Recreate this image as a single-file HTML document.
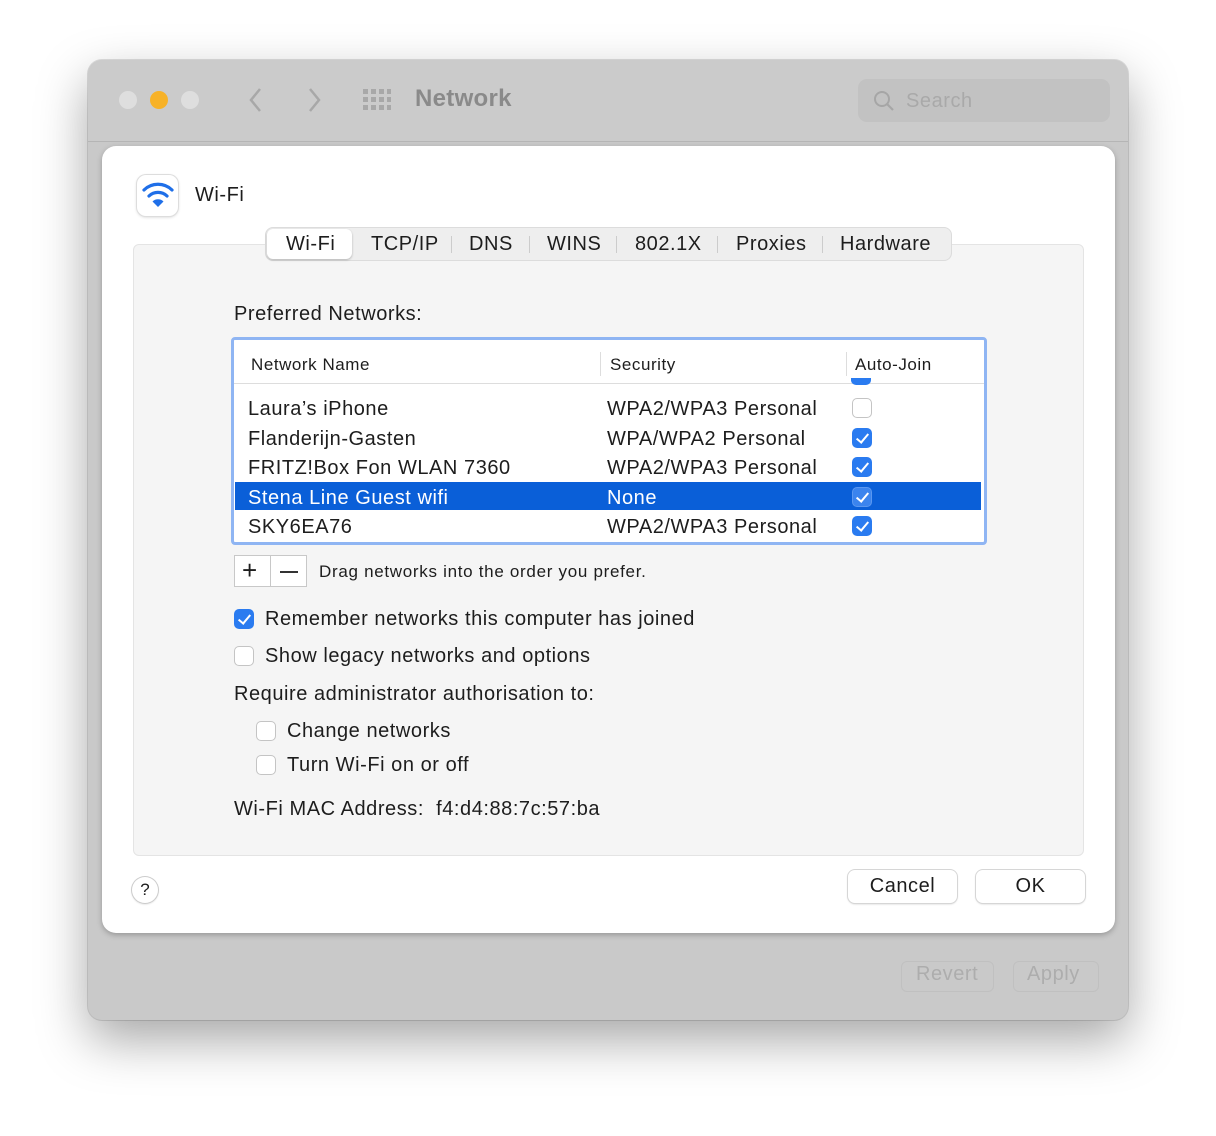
<!DOCTYPE html>
<html><head><style>
*{box-sizing:border-box;margin:0;padding:0}
body{width:1216px;height:1136px;background:#fff;font-family:"Liberation Sans",sans-serif;position:relative;overflow:hidden;color:#1d1d1d;letter-spacing:0.55px}
.abs{position:absolute}
.win{left:88px;top:60px;width:1040px;height:960px;background:#c9c9c9;border-radius:14px;box-shadow:0 20px 50px rgba(0,0,0,.35),0 0 0 1px rgba(0,0,0,.12)}
.tb{left:0;top:0;width:1040px;height:82px;border-bottom:1px solid #b5b5b5;background:#cbcbcb;border-radius:14px 14px 0 0}
.dot{width:18px;height:18px;border-radius:50%;top:31px}
.sheet{left:102px;top:146px;width:1013px;height:787px;background:#fff;border-radius:14px;box-shadow:0 2px 6px rgba(0,0,0,.25)}
.panel{left:133px;top:244px;width:951px;height:612px;background:#f5f5f5;border:1px solid #e4e4e4;border-radius:6px}
.t{position:absolute;font-size:20px;white-space:nowrap}
.cb{position:absolute;width:20px;height:20px;border-radius:5px;border:1px solid #c4c4c4;background:#fff}
.cb.on{background:#2a7bf0;border-color:#2a7bf0}
.cb.on:after{content:"";position:absolute;left:6px;top:2px;width:5px;height:10px;border:solid #fff;border-width:0 2.5px 2.5px 0;transform:rotate(40deg)}
.btn{position:absolute;height:33px;background:#fff;border-radius:7px;box-shadow:0 0 0 1px #d6d6d6,0 1px 2px rgba(0,0,0,.2);font-size:20px;text-align:center;line-height:33px}
</style></head><body>
<div class="abs win">
 <div class="abs tb"></div>
 <div class="abs dot" style="left:31px;background:#dedede"></div>
 <div class="abs dot" style="left:62px;background:#f7b228"></div>
 <div class="abs dot" style="left:93px;background:#dedede"></div>
 <svg class="abs" style="left:158px;top:26px" width="80" height="28"><path d="M14 3 L5 14 L14 25" stroke="#a8a8a8" stroke-width="2.5" fill="none"/><path d="M64 3 L73 14 L64 25" stroke="#a8a8a8" stroke-width="2.5" fill="none"/></svg>
 <svg class="abs" style="left:275px;top:29px" width="28" height="22"><g fill="#a8a8a8"><rect x="0" y="0" width="5" height="5"/><rect x="8" y="0" width="5" height="5"/><rect x="16" y="0" width="5" height="5"/><rect x="24" y="0" width="4" height="5"/><rect x="0" y="8" width="5" height="5"/><rect x="8" y="8" width="5" height="5"/><rect x="16" y="8" width="5" height="5"/><rect x="24" y="8" width="4" height="5"/><rect x="0" y="16" width="5" height="5"/><rect x="8" y="16" width="5" height="5"/><rect x="16" y="16" width="5" height="5"/><rect x="24" y="16" width="4" height="5"/></g></svg>
 <div class="t" style="left:327px;top:25px;font-size:24px;font-weight:bold;color:#8a8a8a;letter-spacing:0.3px">Network</div>
 <div class="abs" style="left:770px;top:19px;width:252px;height:43px;background:#c2c2c2;border-radius:9px"></div>
 <svg class="abs" style="left:785px;top:30px" width="22" height="22"><circle cx="9" cy="9" r="7" stroke="#a6a6a6" stroke-width="2" fill="none"/><path d="M14 14 L20 20" stroke="#a6a6a6" stroke-width="2.2"/></svg>
 <div class="t" style="left:818px;top:30px;color:#a9a9a9">Search</div>
 <div class="abs" style="left:813px;top:901px;width:93px;height:31px;border:1px solid #c0c0c0;border-radius:6px"></div>
 <div class="t" style="left:828px;top:903px;color:#adadad">Revert</div>
 <div class="abs" style="left:925px;top:901px;width:86px;height:31px;border:1px solid #c0c0c0;border-radius:6px"></div>
 <div class="t" style="left:939px;top:903px;color:#adadad">Apply</div>
</div>
<div class="abs sheet"></div>
<div class="abs" style="left:137px;top:175px;width:41px;height:41px;background:#fff;border-radius:9px;box-shadow:0 0 0 1px #ddd,0 1px 3px rgba(0,0,0,.2)"></div>
<svg class="abs" style="left:140px;top:178px" width="36" height="36"><g fill="none" stroke="#1f6fe8" stroke-width="3.2" stroke-linecap="round"><path d="M4 12 A20 20 0 0 1 32 12"/><path d="M9 18 A13 13 0 0 1 27 18"/></g><path d="M12.5 23.5 A8 8 0 0 1 23.5 23.5 L18 29 Z" fill="#1f6fe8"/></svg>
<div class="t" style="left:195px;top:184px">Wi-Fi</div>
<div class="abs panel"></div>
<div class="abs" style="left:266px;top:228px;width:685px;height:32px;background:#eeeeee;border-radius:7px;box-shadow:0 0 0 1px #dcdcdc"></div>
<div class="abs" style="left:267px;top:229px;width:85px;height:30px;background:#fff;border-radius:6px;box-shadow:0 1px 2px rgba(0,0,0,.25)"></div>
<div class="t" style="left:286px;top:233px">Wi-Fi</div>
<div class="t" style="left:371px;top:233px">TCP/IP</div>
<div class="t" style="left:469px;top:233px">DNS</div>
<div class="t" style="left:547px;top:233px">WINS</div>
<div class="t" style="left:635px;top:233px">802.1X</div>
<div class="t" style="left:736px;top:233px">Proxies</div>
<div class="t" style="left:840px;top:233px">Hardware</div>
<div class="abs" style="left:451px;top:236px;width:1px;height:17px;background:#ccc"></div>
<div class="abs" style="left:529px;top:236px;width:1px;height:17px;background:#ccc"></div>
<div class="abs" style="left:616px;top:236px;width:1px;height:17px;background:#ccc"></div>
<div class="abs" style="left:717px;top:236px;width:1px;height:17px;background:#ccc"></div>
<div class="abs" style="left:822px;top:236px;width:1px;height:17px;background:#ccc"></div>
<div class="t" style="left:234px;top:303px">Preferred Networks:</div>
<div class="abs" style="left:231px;top:337px;width:756px;height:208px;border:3px solid #8fb5f3;border-radius:4px;background:#fff;overflow:hidden">
 <div class="abs" style="left:0;top:0;width:750px;height:44px;background:#fff;border-bottom:1px solid #ddd"></div>
 <div class="abs" style="left:366px;top:12px;width:1px;height:24px;background:#ddd"></div>
 <div class="abs" style="left:612px;top:12px;width:1px;height:24px;background:#ddd"></div>
 <div class="t" style="left:17px;top:15px;font-size:17px">Network Name</div>
 <div class="t" style="left:376px;top:15px;font-size:17px">Security</div>
 <div class="t" style="left:621px;top:15px;font-size:17px">Auto-Join</div>
 <div class="abs" style="left:617px;top:38px;width:20px;height:7px;background:#2a7bf0;border-radius:0 0 5px 5px"></div>
 <div class="abs" style="left:1px;top:142px;width:746px;height:28px;background:#0a5fd8"></div>
 <div class="t" style="left:14px;top:58px">Laura’s iPhone</div><div class="t" style="left:373px;top:58px">WPA2/WPA3 Personal</div><div class="cb" style="left:618px;top:58px"></div>
 <div class="t" style="left:14px;top:88px">Flanderijn-Gasten</div><div class="t" style="left:373px;top:88px">WPA/WPA2 Personal</div><div class="cb on" style="left:618px;top:88px"></div>
 <div class="t" style="left:14px;top:117px">FRITZ!Box Fon WLAN 7360</div><div class="t" style="left:373px;top:117px">WPA2/WPA3 Personal</div><div class="cb on" style="left:618px;top:117px"></div>
 <div class="t" style="left:14px;top:147px;color:#fff">Stena Line Guest wifi</div><div class="t" style="left:373px;top:147px;color:#fff">None</div><div class="cb on" style="left:618px;top:147px;background:#3b84ee;border-color:#5a97f0"></div>
 <div class="t" style="left:14px;top:176px">SKY6EA76</div><div class="t" style="left:373px;top:176px">WPA2/WPA3 Personal</div><div class="cb on" style="left:618px;top:176px"></div>
</div>
<div class="abs" style="left:234px;top:555px;width:73px;height:32px;border:1px solid #c8c8c8;background:#fff"></div>
<div class="abs" style="left:270px;top:555px;width:1px;height:32px;background:#c8c8c8"></div>
<div class="t" style="left:242px;top:555px;font-size:26px">+</div>
<div class="abs" style="left:280px;top:571px;width:18px;height:1.5px;background:#333"></div>
<div class="t" style="left:319px;top:562px;font-size:17px;letter-spacing:0.7px">Drag networks into the order you prefer.</div>
<div class="cb on" style="left:234px;top:609px"></div>
<div class="t" style="left:265px;top:608px">Remember networks this computer has joined</div>
<div class="cb" style="left:234px;top:646px"></div>
<div class="t" style="left:265px;top:645px">Show legacy networks and options</div>
<div class="t" style="left:234px;top:683px">Require administrator authorisation to:</div>
<div class="cb" style="left:256px;top:721px"></div>
<div class="t" style="left:287px;top:720px">Change networks</div>
<div class="cb" style="left:256px;top:755px"></div>
<div class="t" style="left:287px;top:754px">Turn Wi-Fi on or off</div>
<div class="t" style="left:234px;top:798px">Wi-Fi MAC Address:&nbsp; f4:d4:88:7c:57:ba</div>
<div class="abs" style="left:132px;top:877px;width:26px;height:26px;border-radius:50%;background:#fff;box-shadow:0 0 0 1px #ccc,0 1px 2px rgba(0,0,0,.2);font-size:17px;text-align:center;line-height:26px;letter-spacing:0">?</div>
<div class="btn" style="left:848px;top:870px;width:109px">Cancel</div>
<div class="btn" style="left:976px;top:870px;width:109px">OK</div>
</body></html>
